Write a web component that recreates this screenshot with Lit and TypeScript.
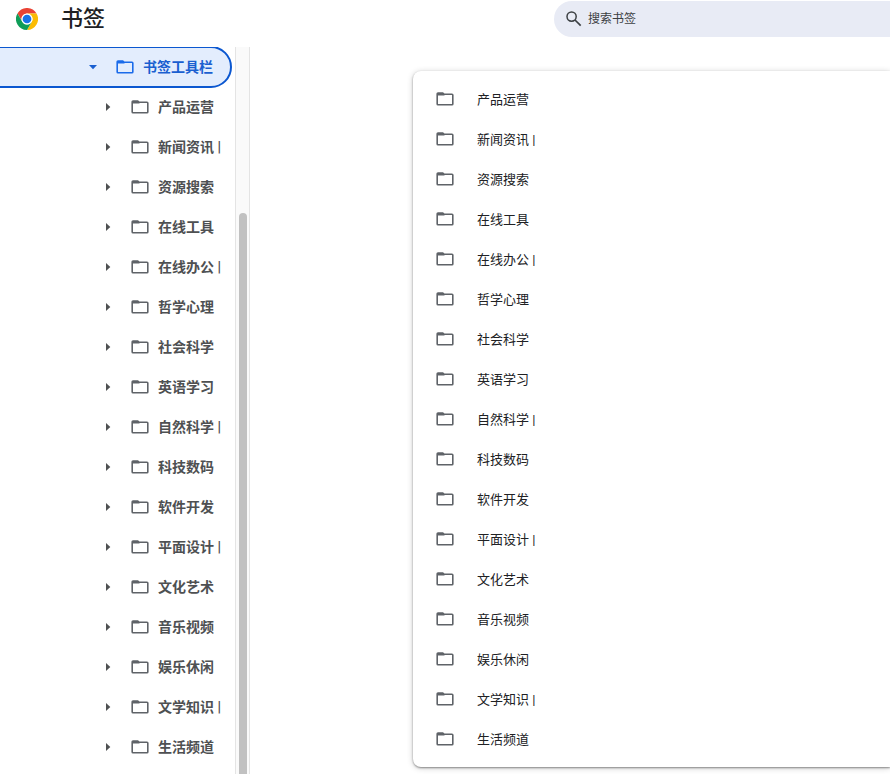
import { LitElement, html, css, svg } from "lit";
import { customElement, state } from "lit/decorators.js";

const FOLDERS = [
  "产品运营",
  "新闻资讯 |",
  "资源搜索",
  "在线工具",
  "在线办公 |",
  "哲学心理",
  "社会科学",
  "英语学习",
  "自然科学 |",
  "科技数码",
  "软件开发",
  "平面设计 |",
  "文化艺术",
  "音乐视频",
  "娱乐休闲",
  "文学知识 |",
  "生活频道",
];

const folderIcon = html`<svg class="folder" viewBox="0 0 20 20" aria-hidden="true">
  ${svg`<path fill="currentColor" fill-rule="evenodd" d="M3 3.200h5l1.500 1.300H17A1.600 1.600 0 0 1 18.600 6.100v8.900A1.600 1.600 0 0 1 17 16.600H3a1.600 1.600 0 0 1-1.600-1.600V4.800A1.600 1.600 0 0 1 3 3.200zM3 6v9h14V6z"/>
  <path fill="currentColor" d="M3 5h6.500v1.500H3z"/>`}
</svg>`;

const arrowIcon = html`<svg class="arrow" viewBox="0 0 20 20" aria-hidden="true">
  ${svg`<path fill="currentColor" d="M8 6l4.300 4-4.300 4z"/>`}
</svg>`;

const chromeLogo = html`<svg class="logo" viewBox="0 0 48 48" aria-hidden="true">
  ${svg`
    <path fill="#ea4335" d="M3.200 12a24 24 0 0 1 41.600 0H24a12 12 0 0 0-10.400 18z"/>
    <path fill="#fbbc04" d="M44.800 12A24 24 0 0 1 24 48l10.400-18A12 12 0 0 0 24 12z"/>
    <path fill="#0f9d58" d="M3.200 12A24 24 0 0 0 24 48l10.400-18a12 12 0 0 1-20.800 0z"/>
    <circle cx="24" cy="24" r="12" fill="#fff"/>
    <circle cx="24" cy="24" r="9.500" fill="#1a73e8"/>`}
</svg>`;

@customElement("app-root")
export class AppRoot extends LitElement {
  @state() private open = true;

  static styles = css`
    :host {
      display: grid;
      grid-template-rows: 47px 1fr;
      min-height: 100vh;
      box-sizing: border-box;
      overflow: hidden;
      background: #fff;
      color: #202124;
      font-family: Roboto, "Noto Sans CJK SC", sans-serif;
    }
    * {
      box-sizing: border-box;
    }
    button,
    input {
      border: 0;
      padding: 0;
      background: none;
      color: inherit;
      font: inherit;
    }
    ul {
      list-style: none;
      margin: 0;
      padding: 0;
    }
    svg {
      display: block;
      flex: none;
    }
    header {
      display: flex;
      align-items: flex-start;
      padding: 1px 0 0 16px;
    }
    .brand {
      display: flex;
      align-items: center;
      gap: 23px;
      width: 538px;
      height: 36px;
    }
    .logo {
      width: 22px;
      height: 22px;
    }
    h1 {
      margin: 0;
      font-size: 22px;
      line-height: 36px;
      font-weight: 500;
    }
    .search {
      display: flex;
      align-items: center;
      flex: 1;
      gap: 4px;
      min-width: 0;
      height: 36px;
      padding-left: 10px;
      border-radius: 18px 0 0 18px;
      background: #e8ebf5;
      color: #3c4043;
    }
    .search svg {
      width: 20px;
      height: 20px;
    }
    .search input {
      flex: 1;
      min-width: 0;
      font-size: 12px;
      line-height: 20px;
      outline: none;
    }
    .search input::placeholder {
      color: #3c4043;
      opacity: 1;
    }
    .body {
      display: flex;
      min-height: 0;
    }
    nav {
      flex: none;
      width: 235px;
      overflow: hidden;
      color: #4e5052;
      font-size: 14px;
      font-weight: 700;
    }
    .row {
      display: flex;
      align-items: center;
      height: 40px;
      padding-left: 98px;
    }
    .row.selected {
      margin: 0 4px 0 -4px;
      padding-left: 87px;
      border-radius: 0 20px 20px 0;
      outline: 2px solid #0b57d0;
      outline-offset: -1px;
      background: #e3edfd;
      color: #1a5fd0;
    }
    .folder,
    .arrow {
      width: 20px;
      height: 20px;
    }
    .folder {
      color: #5f6368;
    }
    .selected .folder {
      color: #1a6bea;
    }
    .selected .arrow {
      transform: rotate(90deg);
    }
    .name {
      display: flex;
      align-items: center;
      gap: 8px;
      margin-left: 12px;
      white-space: nowrap;
    }
    .name span,
    .item span {
      padding-bottom: 2px;
    }
    .track {
      flex: none;
      width: 15px;
      padding: 166px 2px 0 3px;
      border: solid #e4e4e4;
      border-width: 0 1px;
      background: #fafafa;
    }
    .thumb {
      height: 100%;
      border-radius: 4px 4px 0 0;
      background: #c1c1c1;
    }
    main {
      flex: 1;
      min-width: 0;
      padding: 24px 0 7px 163px;
    }
    .card {
      padding: 8px 0;
      border-radius: 8px 0 0 8px;
      background: #fff;
      box-shadow: 0 1px 2px rgba(0, 0, 0, 0.4), 0 1px 6px rgba(0, 0, 0, 0.2);
    }
    .item {
      display: flex;
      align-items: center;
      gap: 22px;
      width: 100%;
      height: 40px;
      padding-left: 22px;
      font-size: 13px;
      text-align: left;
      white-space: nowrap;
    }
  `;

  render() {
    return html`
      <header>
        <div class="brand">
          ${chromeLogo}
          <h1>书签</h1>
        </div>
        <label class="search">
          <svg viewBox="0 0 20 20" aria-hidden="true">
            <circle cx="7.600" cy="7.600" r="4.600" fill="none" stroke="currentColor" stroke-width="1.500" />
            <path d="M11 11l5.700 5.700" fill="none" stroke="currentColor" stroke-width="1.700" />
          </svg>
          <input type="text" placeholder="搜索书签" aria-label="搜索书签" />
        </label>
      </header>
      <div class="body">
        <nav>
          <div class="row selected">
            <button aria-label="展开" aria-expanded=${this.open} @click=${() => (this.open = !this.open)}>
              ${arrowIcon}
            </button>
            <button class="name">${folderIcon}<span>书签工具栏</span></button>
          </div>
          <ul ?hidden=${!this.open}>
            ${FOLDERS.map(
              (name) => html`<li class="row">
                <button aria-label="展开">${arrowIcon}</button>
                <button class="name">${folderIcon}<span>${name}</span></button>
              </li>`
            )}
          </ul>
        </nav>
        <div class="track"><div class="thumb"></div></div>
        <main>
          <ul class="card">
            ${FOLDERS.map(
              (name) => html`<li>
                <button class="item">${folderIcon}<span>${name}</span></button>
              </li>`
            )}
          </ul>
        </main>
      </div>
    `;
  }
}
